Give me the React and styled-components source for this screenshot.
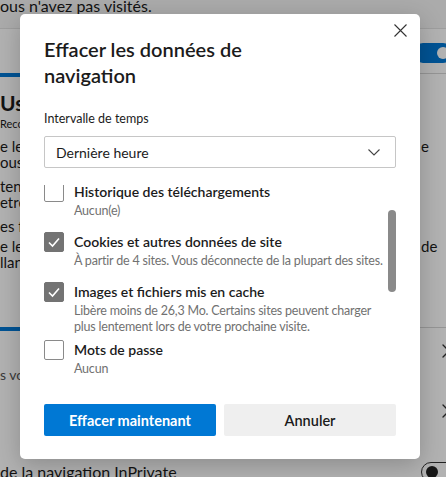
import React from 'react'
import styled, { createGlobalStyle } from 'styled-components'
import { ChevronRight } from 'lucide-react'

const colors = {
  text: '#1b1b1b',
  muted: '#717171',
  blue: '#0078d4',
  border: '#c6c6c6',
  box: '#8a8a8a',
  checked: '#737373',
  light: '#efefef',
}

const GlobalStyle = createGlobalStyle`
  html, body {
    margin: 0;
    padding: 0;
  }
  body {
    width: 446px;
    height: 477px;
    overflow: hidden;
    font-family: Lato, "Noto Sans", sans-serif;
    color: ${colors.text};
  }
`

/* ---------- settings page behind the dialog ---------- */

const Page = styled.div`
  position: relative;
  width: 446px;
  height: 477px;
  overflow: hidden;
  background: #f5f5f5;
  display: flex;
  flex-direction: column;
`

const TopStrip = styled.div`
  height: 28px;
  font-size: 16px;
  line-height: 12px;
  white-space: nowrap;
`

const Card = styled.div`
  flex: 1;
  background: #fff;
  border-top: 1px solid #e3e3e3;
  display: flex;
  flex-direction: column;
`

const CardHeader = styled.div`
  height: 44px;
  box-sizing: border-box;
  padding-top: 14px;
  display: flex;
  justify-content: flex-end;
`

const Toggle = styled.div`
  position: relative;
  flex-shrink: 0;
  width: 40px;
  height: 20px;
  box-sizing: border-box;
  border-radius: 10px;
  margin-right: -7px;
  margin-top: ${(p) => p.$shift || 0}px;
  background: ${(p) => (p.$on ? colors.blue : '#fff')};
  border: ${(p) => (p.$on ? 'none' : '1px solid #333')};
  &::after {
    content: '';
    position: absolute;
    top: 50%;
    width: 12px;
    height: 12px;
    margin-top: -6px;
    border-radius: 50%;
    background: ${(p) => (p.$on ? '#fff' : '#222')};
    ${(p) => (p.$on ? 'right: 4px;' : 'left: 4px;')}
  }
`

const Divider = styled.div`
  display: flex;
  height: 4px;
  &::before {
    content: '';
    width: 20px;
    height: 4px;
    background: ${colors.blue};
  }
  &::after {
    content: '';
    flex: 1;
    height: 1px;
    background: #d6d6d6;
  }
`

const SectionBody = styled.div`
  height: 250px;
  box-sizing: border-box;
  padding-top: 12px;
`

const SectionTitle = styled.div`
  font-size: 21px;
  font-weight: 700;
  line-height: 28px;
  white-space: nowrap;
`

const SectionHint = styled.div`
  font-size: 11px;
  line-height: 14px;
  white-space: nowrap;
`

const Para = styled.div`
  display: grid;
  grid-template-columns: 421px 25px;
  margin-top: ${(p) => p.$gap}px;
  font-size: 15px;
  line-height: 16px;
  white-space: nowrap;
  > span {
    overflow: hidden;
  }
`

const NavRow = styled.div`
  height: ${(p) => p.$height}px;
  box-sizing: border-box;
  padding-top: ${(p) => p.$pad}px;
  display: grid;
  grid-template-columns: 421px 25px;
  white-space: nowrap;
`

const NavText = styled.div`
  overflow: hidden;
  font-size: 16px;
  line-height: 16px;
  min-height: 16px;
`

const NavSub = styled.div`
  margin-top: 24px;
  font-size: 14px;
  line-height: 16px;
  color: #555;
`

const NavIcon = styled.div`
  margin-top: -4px;
  margin-left: 13px;
  color: #333;
`

/* ---------- dialog ---------- */

const Overlay = styled.div`
  position: absolute;
  inset: 0;
  background: rgba(0, 0, 0, 0.3);
`

const Dialog = styled.div`
  position: absolute;
  left: 20px;
  top: 14px;
  width: 400px;
  box-sizing: border-box;
  padding: 22px 24px 23px;
  background: #fff;
  border-radius: 5px;
  box-shadow: 0 6px 24px rgba(0, 0, 0, 0.22);
  display: flex;
  flex-direction: column;
`

const CloseButton = styled.button`
  position: absolute;
  top: 0;
  right: 4px;
  width: 32px;
  height: 32px;
  padding: 0;
  border: 0;
  background: transparent;
  display: flex;
  align-items: center;
  justify-content: center;
`

const Title = styled.h2`
  margin: 0;
  max-width: 270px;
  font-size: 20px;
  font-weight: 600;
  line-height: 26px;
`

const FieldLabel = styled.div`
  margin-top: 22px;
  font-size: 12.5px;
  line-height: 18px;
`

const Select = styled.div`
  margin-top: 8px;
  height: 32px;
  box-sizing: border-box;
  border: 1px solid ${colors.border};
  border-radius: 2px;
  padding: 0 15px 0 11px;
  display: flex;
  align-items: center;
  justify-content: space-between;
  font-size: 14px;
`

const ListArea = styled.div`
  margin-top: 17px;
  height: 195px;
  overflow: hidden;
  display: flex;
`

const ListContent = styled.div`
  flex: 1;
  margin-top: -3px;
`

const Track = styled.div`
  width: 8px;
  flex-shrink: 0;
`

const Thumb = styled.div`
  margin-top: 25px;
  height: 82px;
  border-radius: 4px;
  background: #8a8a8a;
`

const Item = styled.div`
  display: flex;
  gap: 10px;
  min-height: 50px;
  box-sizing: border-box;
  padding-bottom: 5px;
`

const Box = styled.div`
  flex-shrink: 0;
  width: 20px;
  height: 20px;
  box-sizing: border-box;
  border-radius: 2px;
  border: 1px solid ${(p) => (p.$checked ? colors.checked : colors.box)};
  background: ${(p) => (p.$checked ? colors.checked : '#fff')};
  display: flex;
  align-items: center;
  justify-content: center;
`

const ItemLabel = styled.div`
  font-size: 14px;
  font-weight: 600;
  line-height: 20px;
`

const ItemDesc = styled.div`
  margin-top: 1px;
  font-size: 12.5px;
  letter-spacing: -0.2px;
  line-height: 16px;
  color: ${colors.muted};
`

const Actions = styled.div`
  margin-top: 24px;
  display: grid;
  grid-template-columns: 1fr 1fr;
  gap: 8px;
`

const Button = styled.button`
  height: 32px;
  border: 0;
  border-radius: 2px;
  font-family: inherit;
  font-size: 14.5px;
  font-weight: ${(p) => (p.$primary ? 700 : 600)};
  background: ${(p) => (p.$primary ? colors.blue : colors.light)};
  color: ${(p) => (p.$primary ? '#fff' : colors.text)};
`

const items = [
  { label: 'Historique des téléchargements', desc: 'Aucun(e)', checked: false },
  { label: 'Cookies et autres données de site', desc: 'À partir de 4 sites. Vous déconnecte de la plupart des sites.', checked: true },
  { label: 'Images et fichiers mis en cache', desc: 'Libère moins de 26,3 Mo. Certains sites peuvent charger plus lentement lors de votre prochaine visite.', checked: true },
  { label: 'Mots de passe', desc: 'Aucun', checked: false },
]

const Check = () => (
  <svg width="14" height="14" viewBox="0 0 14 14">
    <polyline points="2,7.5 5.5,11 12,3.5" fill="none" stroke="#fff" strokeWidth="1.6" />
  </svg>
)

const App = () => {
  return (
    <>
      <GlobalStyle />
      <Page>
        <TopStrip>ous n'avez pas visités.</TopStrip>
        <Card>
          <CardHeader>
            <Toggle $on />
          </CardHeader>
          <Divider />
          <SectionBody>
            <SectionTitle>Usage</SectionTitle>
            <SectionHint>Recommandé</SectionHint>
            <Para $gap={7}>
              <span>e les sites</span><span>e</span>
              <span>ous n'avez</span><span></span>
            </Para>
            <Para $gap={8}>
              <span>tenu</span><span></span>
              <span>etre</span><span></span>
            </Para>
            <Para $gap={8}>
              <span>es fo</span><span></span>
            </Para>
            <Para $gap={4}>
              <span>e les</span><span>de</span>
              <span>llant</span><span></span>
            </Para>
          </SectionBody>
          <Divider />
          <NavRow $height={60} $pad={12}>
            <NavText>
              <NavSub>s vous</NavSub>
            </NavText>
            <NavIcon><ChevronRight size={24} strokeWidth={1.3} /></NavIcon>
          </NavRow>
          <NavRow $height={60} $pad={12}>
            <NavText />
            <NavIcon><ChevronRight size={24} strokeWidth={1.3} /></NavIcon>
          </NavRow>
          <NavRow $height={26} $pad={13}>
            <NavText>de la navigation InPrivate</NavText>
            <Toggle $shift={-2} />
          </NavRow>
        </Card>

        <Overlay />

        <Dialog>
          <CloseButton aria-label="Fermer">
            <svg width="13" height="13" viewBox="0 0 13 13">
              <path d="M0.5 0.5 L12.5 12.5 M12.5 0.5 L0.5 12.5" stroke="#333" strokeWidth="1.1" />
            </svg>
          </CloseButton>
          <Title>Effacer les données de navigation</Title>
          <FieldLabel>Intervalle de temps</FieldLabel>
          <Select>
            <span>Dernière heure</span>
            <svg width="12" height="7" viewBox="0 0 12 7">
              <polyline points="0.5,0.5 6,6 11.5,0.5" fill="none" stroke="#444" strokeWidth="1.1" />
            </svg>
          </Select>
          <ListArea>
            <ListContent>
              {items.map((it) => (
                <Item key={it.label}>
                  <Box $checked={it.checked}>{it.checked && <Check />}</Box>
                  <div>
                    <ItemLabel>{it.label}</ItemLabel>
                    <ItemDesc>{it.desc}</ItemDesc>
                  </div>
                </Item>
              ))}
            </ListContent>
            <Track>
              <Thumb />
            </Track>
          </ListArea>
          <Actions>
            <Button $primary>Effacer maintenant</Button>
            <Button>Annuler</Button>
          </Actions>
        </Dialog>
      </Page>
    </>
  )
}

export default App
